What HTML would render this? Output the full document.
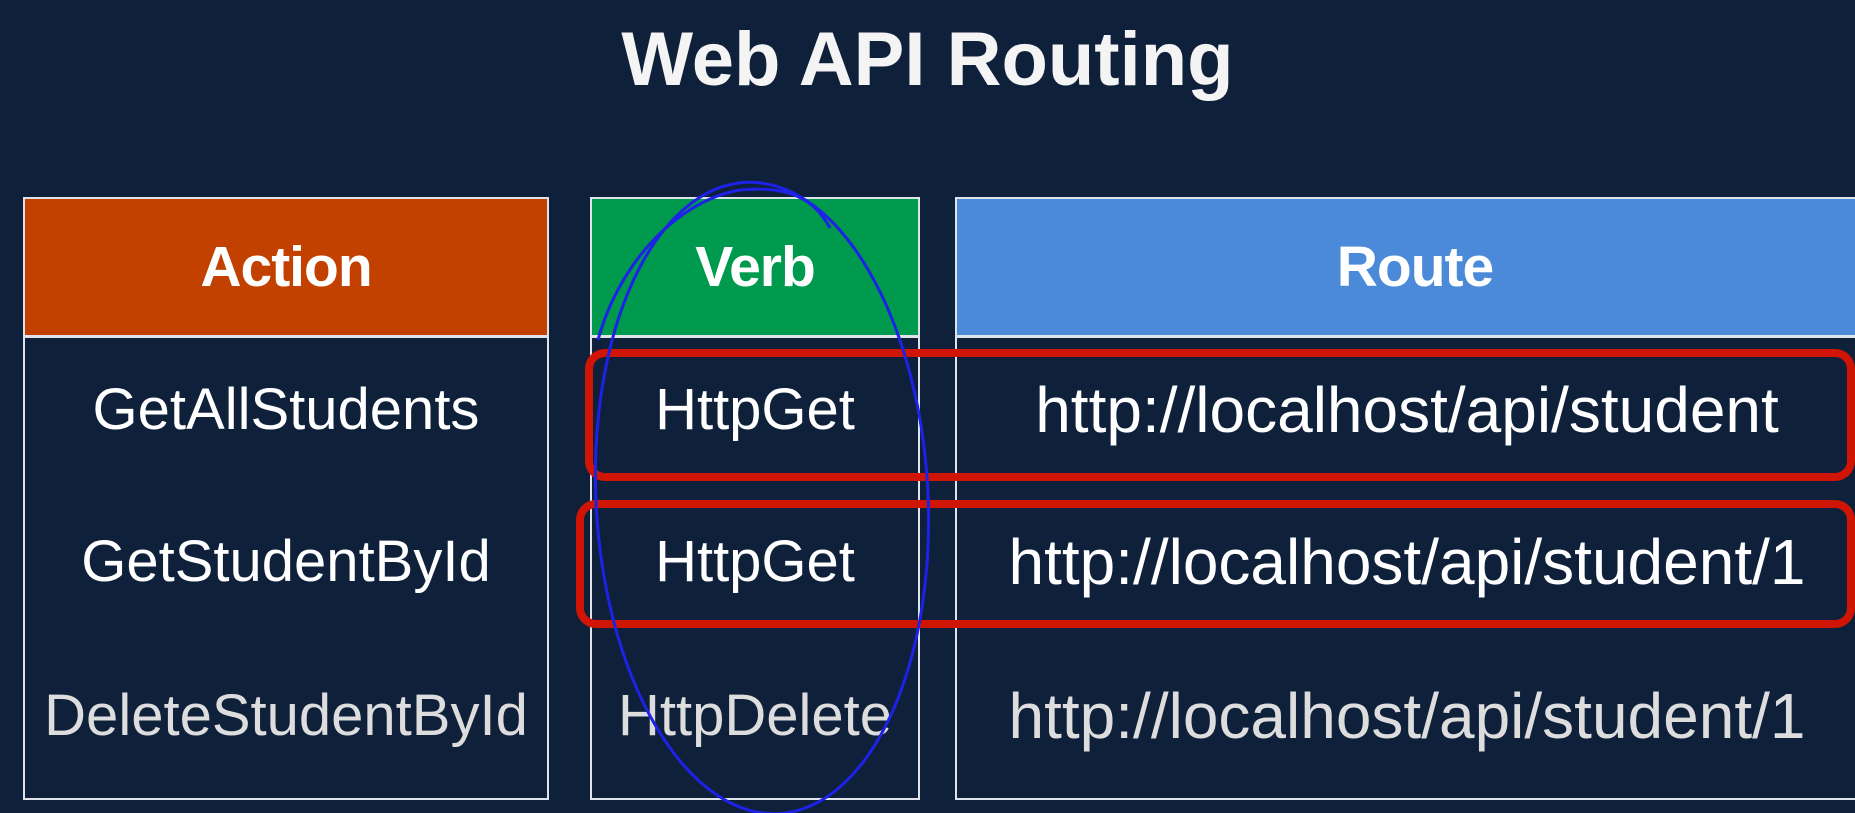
<!DOCTYPE html>
<html><head><style>
body{margin:0;width:1855px;height:813px;overflow:hidden;background:#0f203b;font-family:"Liberation Sans",sans-serif;position:relative}
.t{position:absolute;left:0;width:1855px;top:16px;text-align:center;color:#f4f4f4;font-weight:bold;font-size:76px}
.box{position:absolute;border:2px solid #dfe3ea;box-sizing:border-box;background:#0f203b}
.h{position:absolute;left:0;right:0;top:0;height:136px;border-bottom:3px solid #dfe3ea;color:#fff;font-weight:bold;font-size:57px;display:flex;align-items:center;justify-content:center;letter-spacing:-1px}
.c{position:absolute;width:100%;text-align:center;color:#fff;font-size:58px;line-height:70px;white-space:nowrap}
</style></head><body>
<div class="t">Web API Routing</div>
<div class="box" style="left:23px;top:197px;width:526px;height:603px">
<div class="h" style="background:#c24000">Action</div>
<div class="c" style="top:176px">GetAllStudents</div>
<div class="c" style="top:328px">GetStudentById</div>
<div class="c" style="top:482px;color:#ddd">DeleteStudentById</div>
</div>
<div class="box" style="left:590px;top:197px;width:330px;height:603px">
<div class="h" style="background:#009a4e">Verb</div>
<div class="c" style="top:176px">HttpGet</div>
<div class="c" style="top:328px">HttpGet</div>
<div class="c" style="top:482px;color:#ddd">HttpDelete</div>
</div>
<div class="box" style="left:955px;top:197px;width:920px;height:603px">
<div class="h" style="background:#4a8ad8">Route</div>
<div class="c" style="top:176px;width:900px;font-size:64px">http://localhost/api/student</div>
<div class="c" style="top:328px;width:900px;font-size:64px">http://localhost/api/student/1</div>
<div class="c" style="top:482px;width:900px;font-size:64px;color:#ddd">http://localhost/api/student/1</div>
</div>
<svg width="1855" height="813" style="position:absolute;left:0;top:0">
<rect x="589" y="353" width="1262" height="124" rx="16" fill="none" stroke="#d01505" stroke-width="8"/>
<rect x="580" y="504" width="1271" height="120" rx="16" fill="none" stroke="#d01505" stroke-width="8"/>
<g fill="none" stroke="#1e22e6" stroke-width="3">
<ellipse cx="762" cy="498" rx="166" ry="316" transform="rotate(-3 762 498)"/>
<path d="M598 340 C620 260 680 200 740 190 C790 185 815 200 830 228"/>
</g>
</svg>
</body></html>
